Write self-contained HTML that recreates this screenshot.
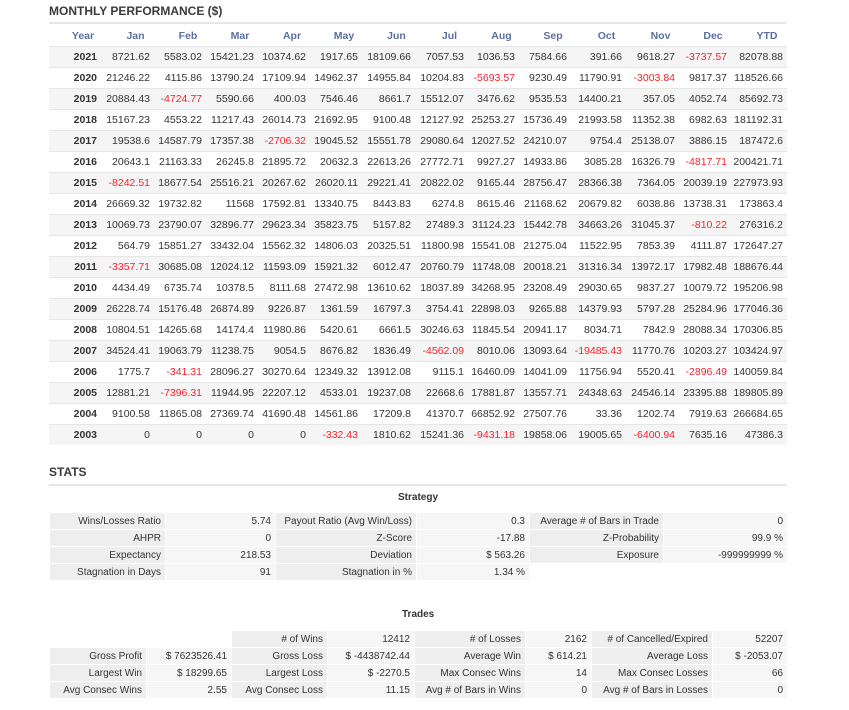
<!DOCTYPE html>
<html><head><meta charset="utf-8"><style>
body{margin:0;background:#fff;font-family:"Liberation Sans",Arial,sans-serif;color:#333;width:849px;height:710px;overflow:hidden;position:relative}
h2{position:absolute;left:49px;margin:0;font-size:12px;font-weight:bold;color:#3a3a3a}
.hr{position:absolute;left:49px;width:738px;height:0;border-top:2px solid #e6e6e6}
table{border-collapse:collapse;table-layout:fixed;position:absolute}
#mp{left:49px;top:26px;width:738px;font-size:10.5px}
#mp th{height:20px;color:#5b6fa0;font-weight:bold;text-align:center;padding:0 0 0 16px;font-size:10.5px}
#mp td{height:20px;text-align:right;padding:0 4px 0 0;border-top:1px solid #e6e6e6;white-space:nowrap}
#mp tr:nth-child(even) td{background:#f5f5f5}
#mp td:first-child{font-weight:bold}
.r{color:#f5222d}
.st{font-size:10px}
.st td{height:16px;padding:0 4px;text-align:right;white-space:nowrap;border:1px solid #fff}
.st td.l{background:#eeeeee}
.st td.v{background:#f6f6f6}
.cap{position:absolute;font-size:10px;font-weight:bold;color:#333}
</style></head><body>
<h2 style="top:4px">MONTHLY PERFORMANCE ($)</h2>
<div class="hr" style="top:22px"></div>
<table id="mp">
<colgroup><col style="width:52px"><col style="width:53px"><col style="width:52px"><col style="width:52px"><col style="width:52px"><col style="width:52px"><col style="width:53px"><col style="width:53px"><col style="width:51px"><col style="width:52px"><col style="width:55px"><col style="width:53px"><col style="width:52px"><col style="width:56px"></colgroup>
<tr><th>Year</th><th>Jan</th><th>Feb</th><th>Mar</th><th>Apr</th><th>May</th><th>Jun</th><th>Jul</th><th>Aug</th><th>Sep</th><th>Oct</th><th>Nov</th><th>Dec</th><th>YTD</th></tr>
<tr><td>2021</td><td>8721.62</td><td>5583.02</td><td>15421.23</td><td>10374.62</td><td>1917.65</td><td>18109.66</td><td>7057.53</td><td>1036.53</td><td>7584.66</td><td>391.66</td><td>9618.27</td><td class="r">-3737.57</td><td>82078.88</td></tr>
<tr><td>2020</td><td>21246.22</td><td>4115.86</td><td>13790.24</td><td>17109.94</td><td>14962.37</td><td>14955.84</td><td>10204.83</td><td class="r">-5693.57</td><td>9230.49</td><td>11790.91</td><td class="r">-3003.84</td><td>9817.37</td><td>118526.66</td></tr>
<tr><td>2019</td><td>20884.43</td><td class="r">-4724.77</td><td>5590.66</td><td>400.03</td><td>7546.46</td><td>8661.7</td><td>15512.07</td><td>3476.62</td><td>9535.53</td><td>14400.21</td><td>357.05</td><td>4052.74</td><td>85692.73</td></tr>
<tr><td>2018</td><td>15167.23</td><td>4553.22</td><td>11217.43</td><td>26014.73</td><td>21692.95</td><td>9100.48</td><td>12127.92</td><td>25253.27</td><td>15736.49</td><td>21993.58</td><td>11352.38</td><td>6982.63</td><td>181192.31</td></tr>
<tr><td>2017</td><td>19538.6</td><td>14587.79</td><td>17357.38</td><td class="r">-2706.32</td><td>19045.52</td><td>15551.78</td><td>29080.64</td><td>12027.52</td><td>24210.07</td><td>9754.4</td><td>25138.07</td><td>3886.15</td><td>187472.6</td></tr>
<tr><td>2016</td><td>20643.1</td><td>21163.33</td><td>26245.8</td><td>21895.72</td><td>20632.3</td><td>22613.26</td><td>27772.71</td><td>9927.27</td><td>14933.86</td><td>3085.28</td><td>16326.79</td><td class="r">-4817.71</td><td>200421.71</td></tr>
<tr><td>2015</td><td class="r">-8242.51</td><td>18677.54</td><td>25516.21</td><td>20267.62</td><td>26020.11</td><td>29221.41</td><td>20822.02</td><td>9165.44</td><td>28756.47</td><td>28366.38</td><td>7364.05</td><td>20039.19</td><td>227973.93</td></tr>
<tr><td>2014</td><td>26669.32</td><td>19732.82</td><td>11568</td><td>17592.81</td><td>13340.75</td><td>8443.83</td><td>6274.8</td><td>8615.46</td><td>21168.62</td><td>20679.82</td><td>6038.86</td><td>13738.31</td><td>173863.4</td></tr>
<tr><td>2013</td><td>10069.73</td><td>23790.07</td><td>32896.77</td><td>29623.34</td><td>35823.75</td><td>5157.82</td><td>27489.3</td><td>31124.23</td><td>15442.78</td><td>34663.26</td><td>31045.37</td><td class="r">-810.22</td><td>276316.2</td></tr>
<tr><td>2012</td><td>564.79</td><td>15851.27</td><td>33432.04</td><td>15562.32</td><td>14806.03</td><td>20325.51</td><td>11800.98</td><td>15541.08</td><td>21275.04</td><td>11522.95</td><td>7853.39</td><td>4111.87</td><td>172647.27</td></tr>
<tr><td>2011</td><td class="r">-3357.71</td><td>30685.08</td><td>12024.12</td><td>11593.09</td><td>15921.32</td><td>6012.47</td><td>20760.79</td><td>11748.08</td><td>20018.21</td><td>31316.34</td><td>13972.17</td><td>17982.48</td><td>188676.44</td></tr>
<tr><td>2010</td><td>4434.49</td><td>6735.74</td><td>10378.5</td><td>8111.68</td><td>27472.98</td><td>13610.62</td><td>18037.89</td><td>34268.95</td><td>23208.49</td><td>29030.65</td><td>9837.27</td><td>10079.72</td><td>195206.98</td></tr>
<tr><td>2009</td><td>26228.74</td><td>15176.48</td><td>26874.89</td><td>9226.87</td><td>1361.59</td><td>16797.3</td><td>3754.41</td><td>22898.03</td><td>9265.88</td><td>14379.93</td><td>5797.28</td><td>25284.96</td><td>177046.36</td></tr>
<tr><td>2008</td><td>10804.51</td><td>14265.68</td><td>14174.4</td><td>11980.86</td><td>5420.61</td><td>6661.5</td><td>30246.63</td><td>11845.54</td><td>20941.17</td><td>8034.71</td><td>7842.9</td><td>28088.34</td><td>170306.85</td></tr>
<tr><td>2007</td><td>34524.41</td><td>19063.79</td><td>11238.75</td><td>9054.5</td><td>8676.82</td><td>1836.49</td><td class="r">-4562.09</td><td>8010.06</td><td>13093.64</td><td class="r">-19485.43</td><td>11770.76</td><td>10203.27</td><td>103424.97</td></tr>
<tr><td>2006</td><td>1775.7</td><td class="r">-341.31</td><td>28096.27</td><td>30270.64</td><td>12349.32</td><td>13912.08</td><td>9115.1</td><td>16460.09</td><td>14041.09</td><td>11756.94</td><td>5520.41</td><td class="r">-2896.49</td><td>140059.84</td></tr>
<tr><td>2005</td><td>12881.21</td><td class="r">-7396.31</td><td>11944.95</td><td>22207.12</td><td>4533.01</td><td>19237.08</td><td>22668.6</td><td>17881.87</td><td>13557.71</td><td>24348.63</td><td>24546.14</td><td>23395.88</td><td>189805.89</td></tr>
<tr><td>2004</td><td>9100.58</td><td>11865.08</td><td>27369.74</td><td>41690.48</td><td>14561.86</td><td>17209.8</td><td>41370.7</td><td>66852.92</td><td>27507.76</td><td>33.36</td><td>1202.74</td><td>7919.63</td><td>266684.65</td></tr>
<tr><td>2003</td><td>0</td><td>0</td><td>0</td><td>0</td><td class="r">-332.43</td><td>1810.62</td><td>15241.36</td><td class="r">-9431.18</td><td>19858.06</td><td>19005.65</td><td class="r">-6400.94</td><td>7635.16</td><td>47386.3</td></tr>
</table>

<h2 style="top:465px">STATS</h2>
<div class="hr" style="top:484px"></div>
<div class="cap" style="left:398px;top:492px">Strategy</div>
<table class="st" style="left:49px;top:512px;width:738px">
<colgroup><col style="width:116px"><col style="width:110px"><col style="width:141px"><col style="width:113px"><col style="width:134px"><col style="width:124px"></colgroup>
<tr><td class="l">Wins/Losses Ratio</td><td class="v">5.74</td><td class="l">Payout Ratio (Avg Win/Loss)</td><td class="v">0.3</td><td class="l">Average # of Bars in Trade</td><td class="v">0</td></tr>
<tr><td class="l">AHPR</td><td class="v">0</td><td class="l">Z-Score</td><td class="v">-17.88</td><td class="l">Z-Probability</td><td class="v">99.9 %</td></tr>
<tr><td class="l">Expectancy</td><td class="v">218.53</td><td class="l">Deviation</td><td class="v">$ 563.26</td><td class="l">Exposure</td><td class="v">-999999999 %</td></tr>
<tr><td class="l">Stagnation in Days</td><td class="v">91</td><td class="l">Stagnation in %</td><td class="v">1.34 %</td><td></td><td></td></tr>
</table>

<div class="cap" style="left:402px;top:609px">Trades</div>
<table class="st" style="left:49px;top:630px;width:738px">
<colgroup><col style="width:97px"><col style="width:85px"><col style="width:96px"><col style="width:87px"><col style="width:111px"><col style="width:66px"><col style="width:121px"><col style="width:75px"></colgroup>
<tr><td></td><td></td><td class="l"># of Wins</td><td class="v">12412</td><td class="l"># of Losses</td><td class="v">2162</td><td class="l"># of Cancelled/Expired</td><td class="v">52207</td></tr>
<tr><td class="l">Gross Profit</td><td class="v">$ 7623526.41</td><td class="l">Gross Loss</td><td class="v">$ -4438742.44</td><td class="l">Average Win</td><td class="v">$ 614.21</td><td class="l">Average Loss</td><td class="v">$ -2053.07</td></tr>
<tr><td class="l">Largest Win</td><td class="v">$ 18299.65</td><td class="l">Largest Loss</td><td class="v">$ -2270.5</td><td class="l">Max Consec Wins</td><td class="v">14</td><td class="l">Max Consec Losses</td><td class="v">66</td></tr>
<tr><td class="l">Avg Consec Wins</td><td class="v">2.55</td><td class="l">Avg Consec Loss</td><td class="v">11.15</td><td class="l">Avg # of Bars in Wins</td><td class="v">0</td><td class="l">Avg # of Bars in Losses</td><td class="v">0</td></tr>
</table>
</body></html>
